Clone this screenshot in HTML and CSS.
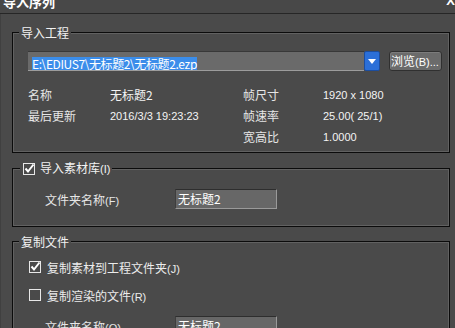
FILE: index.html
```html
<!DOCTYPE html>
<html lang="zh-CN">
<head>
<meta charset="utf-8">
<title>导入序列</title>
<link rel="stylesheet" href="styles.css">
</head>
<body>
<div class="dialog">
  <div class="titlebar">
    <span class="title">导入序列</span>
    <span class="close">X</span>
  </div>
  <div class="content">
    <fieldset class="group g1">
      <legend class="legend">导入工程</legend>
      <div class="pathrow">
        <div class="combo">
          <div class="field"><span class="sel">E:\EDIUS7\无标题2\无标题2.ezp</span></div>
          <div class="drop"><svg width="8" height="5" viewBox="0 0 8 5"><path d="M0 0H8L4 5Z" fill="#fff"/></svg></div>
        </div>
        <div class="btn">浏览<span class="lat">(B)...</span></div>
      </div>
      <div class="info">
        <span class="lbl">名称</span><span class="val cjk">无标题2</span><span class="lbl">帧尺寸</span><span class="val">1920 x 1080</span>
        <span class="lbl">最后更新</span><span class="val">2016/3/3 19:23:23</span><span class="lbl">帧速率</span><span class="val">25.00( 25/1)</span>
        <span></span><span></span><span class="lbl">宽高比</span><span class="val">1.0000</span>
      </div>
    </fieldset>

    <fieldset class="group g2">
      <legend class="legend legend-check">
        <svg class="chk" width="12" height="12" viewBox="0 0 12 12"><rect x="0.5" y="0.5" width="11" height="11" fill="none" stroke="#e8e8e8"/><path d="M2.5 5.5L5 8.5L10.5 1.5" fill="none" stroke="#fff" stroke-width="2"/></svg>
        <span>导入素材库<span class="lat">(I)</span></span>
      </legend>
      <div class="formrow">
        <span class="flabel">文件夹名称<span class="lat">(F)</span></span>
        <div class="input">无标题2</div>
      </div>
    </fieldset>

    <fieldset class="group g3">
      <legend class="legend">复制文件</legend>
      <div class="checkrow first">
        <svg class="chk" width="12" height="12" viewBox="0 0 12 12"><rect x="0.5" y="0.5" width="11" height="11" fill="none" stroke="#e8e8e8"/><path d="M2.5 5.5L5 8.5L10.5 1.5" fill="none" stroke="#fff" stroke-width="2"/></svg>
        <span>复制素材到工程文件夹<span class="lat">(J)</span></span>
      </div>
      <div class="checkrow">
        <svg class="chk" width="12" height="12" viewBox="0 0 12 12"><rect x="0.5" y="0.5" width="11" height="11" fill="none" stroke="#e8e8e8"/></svg>
        <span>复制渲染的文件<span class="lat">(R)</span></span>
      </div>
      <div class="formrow last">
        <span class="flabel">文件夹名称<span class="lat">(O)</span></span>
        <div class="input">无标题2</div>
      </div>
    </fieldset>
  </div>
</div>
</body>
</html>
```

FILE: styles.css
```css
* { box-sizing: border-box; }
html, body { margin: 0; height: 100%; }
body {
  background: #4a4a4a;
  font-family: "Noto Sans CJK SC", "Liberation Sans", sans-serif;
  font-size: 12px;
  color: #ececec;
  overflow: hidden;
}
.dialog { height: 100%; display: flex; flex-direction: column; }
.titlebar {
  height: 14px;
  flex: none;
  border-bottom: 1px solid #262626;
  background: #484848;
  display: flex;
  justify-content: space-between;
  align-items: flex-start;
  overflow: hidden;
}
.title {
  font-weight: bold;
  font-size: 13px;
  line-height: 13px;
  margin: -5px 0 0 3px;
  color: #fff;
}
.close {
  font: bold 13px/13px "Liberation Sans", sans-serif;
  margin: -6px 0 0 0;
  color: #fff;
}
.content {
  flex: 1;
  display: flex;
  flex-direction: column;
  padding: 0 5px 0 12px;
  box-shadow: inset 1px 0 0 #404040;
}
.group {
  margin: 0;
  padding: 0;
  min-width: 0;
  border: 1px solid #0b0b0b;
  box-shadow: inset 0 0 0 1px #616161;
}
.legend {
  margin-left: 6px;
  padding: 0 2px;
  line-height: 15px;
  height: 15px;
  background: #4a4a4a;
  color: #f2f2f2;
}
.lat { font-family: "Liberation Sans", sans-serif; font-size: 11px; }

.g1 { margin-top: 11px; padding-bottom: 5px; }
.pathrow { display: flex; align-items: center; margin: 11px 0 0 15px; }
.combo { display: flex; width: 352px; height: 20px; }
.field {
  flex: 1;
  background: #6a6a6a;
  border-top: 1px solid #383838;
  border-bottom: 1px solid #9c9c9c;
  padding: 3px 0 0 4px;
  overflow: hidden;
  white-space: nowrap;
}
.sel {
  background: #3b8dea;
  color: #fff;
  line-height: 13px;
  display: inline-block;
  height: 13px;
  letter-spacing: -0.4px;
}
.drop {
  width: 16px;
  background: #2b6fd8;
  border: 1px solid #1c4d9e;
  border-radius: 2px;
  display: flex;
  align-items: center;
  justify-content: center;
}
.btn {
  margin-left: 9px;
  width: 53px;
  height: 20px;
  background: #6b6b6b;
  border: 1px solid #303030;
  border-radius: 3px;
  box-shadow: inset 1px 1px 0 #7c7c7c;
  color: #fff;
  line-height: 18px;
  padding-left: 1px;
  white-space: nowrap;
  overflow: hidden;
}
.info {
  display: grid;
  grid-template-columns: 82px 133px 80px 1fr;
  grid-auto-rows: 21px;
  align-items: center;
  margin: 13px 0 0 15px;
}
.lbl { color: #e6e6e6; }
.val { font-family: "Liberation Sans", sans-serif; font-size: 11px; color: #f4f4f4; }
.val.cjk { font-family: "Noto Sans CJK SC", sans-serif; font-size: 12px; }

.g2 { margin-top: 8px; padding-bottom: 17px; }
.legend-check { margin-left: 7px; padding: 0 2px 0 3px; display: flex; align-items: center; gap: 5px; }
.formrow { display: flex; align-items: center; height: 20px; margin: 13px 0 0 32px; }
.flabel { width: 130px; color: #e6e6e6; }
.input {
  width: 102px;
  height: 20px;
  background: #676767;
  border-top: 1px solid #2e2e2e;
  border-left: 1px solid #3e3e3e;
  border-right: 1px solid #9a9a9a;
  border-bottom: 1px solid #9a9a9a;
  padding-left: 2px;
  line-height: 18px;
  color: #fff;
}

.g3 { margin-top: 7px; flex: 1; }
.checkrow { display: flex; align-items: center; gap: 6px; height: 20px; margin: 8px 0 0 16px; }
.checkrow.first { margin-top: 8px; }
.formrow.last { margin-top: 11px; }
.chk { flex: none; display: block; }
```
